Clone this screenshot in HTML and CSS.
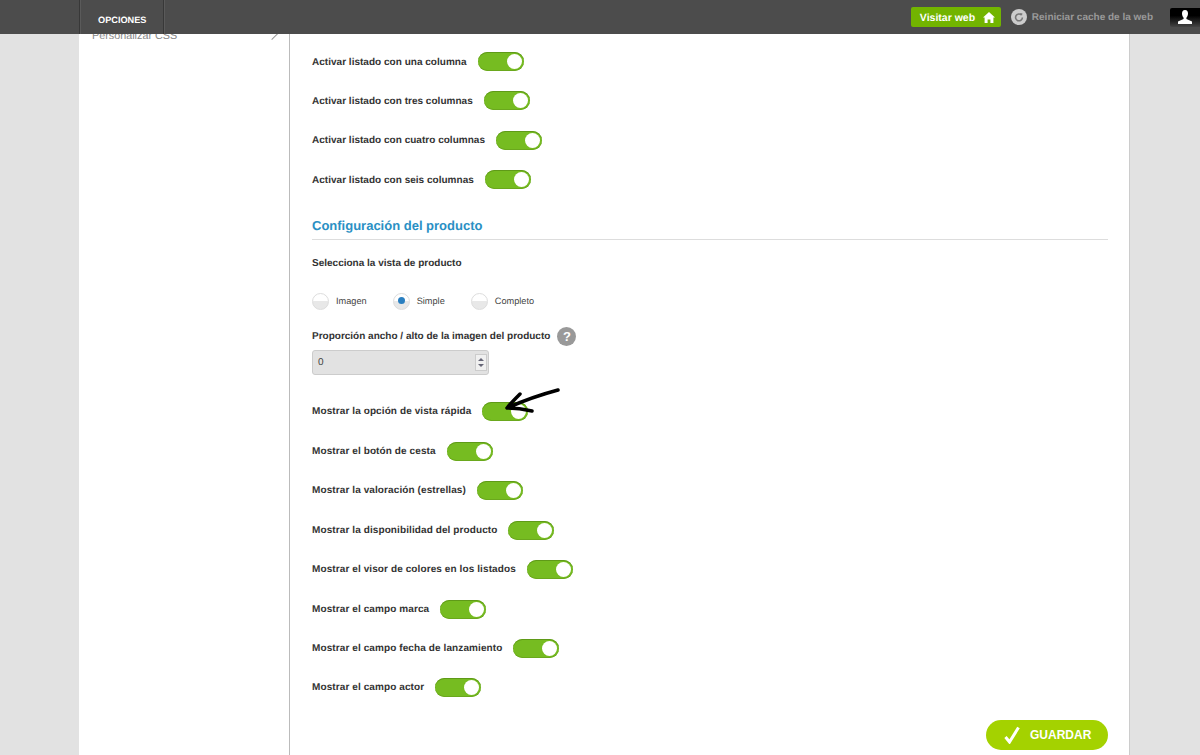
FILE: index.html
```html
<!DOCTYPE html>
<html lang="es">
<head>
<meta charset="utf-8">
<title>Opciones</title>
<link rel="stylesheet" href="styles.css">
</head>
<body>
<header class="topbar">
  <nav class="tabs"><a class="tab">OPCIONES</a></nav>
  <div class="actions">
    <a class="visit">Visitar web
      <svg class="home" viewBox="0 0 12 11" width="12" height="11"><path d="M6 0 L12 5.6 L10.4 5.6 L10.4 11 L7.4 11 L7.4 7.4 L4.6 7.4 L4.6 11 L1.6 11 L1.6 5.6 L0 5.6 Z" fill="#fff"/></svg>
    </a>
    <a class="reset">
      <svg class="reload" viewBox="0 0 16 16" width="16" height="16"><circle cx="8" cy="8" r="8" fill="#ccc"/><path d="M10.4 6 A3.4 3.4 0 1 0 11.4 8.4" fill="none" stroke="#777" stroke-width="1.6"/><path d="M8.8 4.2 L11.4 4.2 L11 6.8 Z" fill="#777"/></svg>
      <span class="reset-text">Reiniciar cache de la web</span>
    </a>
    <a class="user">
      <svg viewBox="0 0 14 14" width="14" height="14"><path d="M7 0 C9.2 0 10 1.8 10 3.6 C10 5.4 9.2 7 8.4 7.8 L8.4 9 L14 11.4 L14 14 L0 14 L0 11.4 L5.6 9 L5.6 7.8 C4.8 7 4 5.4 4 3.6 C4 1.8 4.8 0 7 0 Z" fill="#fff"/></svg>
    </a>
  </div>
</header>
<div class="page">
  <aside class="sidebar">
    <a class="side-link">Personalizar CSS <span class="chev"></span></a>
  </aside>
  <main class="content">
    <div class="group first">
      <div class="row"><span class="lbl">Activar listado con una columna</span><span class="toggle"></span></div>
      <div class="row"><span class="lbl">Activar listado con tres columnas</span><span class="toggle"></span></div>
      <div class="row"><span class="lbl">Activar listado con cuatro columnas</span><span class="toggle"></span></div>
      <div class="row"><span class="lbl">Activar listado con seis columnas</span><span class="toggle"></span></div>
    </div>
    <h2 class="section">Configuración del producto</h2>
    <p class="lbl sub">Selecciona la vista de producto</p>
    <div class="radios">
      <label class="radio"><span class="dot"></span>Imagen</label>
      <label class="radio"><span class="dot on"></span>Simple</label>
      <label class="radio"><span class="dot"></span>Completo</label>
    </div>
    <div class="prop"><span class="lbl">Proporción ancho / alto de la imagen del producto</span><span class="help">?</span></div>
    <div class="spin"><span class="val">0</span><span class="arrows"><i class="up"></i><i class="down"></i></span></div>
    <div class="group second">
      <div class="row"><span class="lbl">Mostrar la opción de vista rápida</span><span class="toggle"></span>
        <svg class="scribble" viewBox="0 0 60 30" width="60" height="30"><path d="M55 2 C40 6 22 12 4 20 M17 6 C12 11 8 15 4 20 C12 20 20 21 29 23" fill="none" stroke="#000" stroke-width="3.5" stroke-linecap="round" stroke-linejoin="round"/></svg>
      </div>
      <div class="row"><span class="lbl">Mostrar el botón de cesta</span><span class="toggle"></span></div>
      <div class="row"><span class="lbl">Mostrar la valoración (estrellas)</span><span class="toggle"></span></div>
      <div class="row"><span class="lbl">Mostrar la disponibilidad del producto</span><span class="toggle"></span></div>
      <div class="row"><span class="lbl">Mostrar el visor de colores en los listados</span><span class="toggle"></span></div>
      <div class="row"><span class="lbl">Mostrar el campo marca</span><span class="toggle"></span></div>
      <div class="row"><span class="lbl">Mostrar el campo fecha de lanzamiento</span><span class="toggle"></span></div>
      <div class="row"><span class="lbl">Mostrar el campo actor</span><span class="toggle"></span></div>
    </div>
    <div class="footer">
      <button class="save">
        <svg viewBox="0 0 16 18" width="16" height="18"><path d="M1.5 11 L5.5 16 L14.5 1.5" fill="none" stroke="#fff" stroke-width="3"/></svg>
        GUARDAR
      </button>
    </div>
  </main>
</div>
</body>
</html>
```
FILE: styles.css
```css
* { box-sizing: border-box; }
html, body { margin: 0; height: 755px; overflow: hidden; }
body {
  background: #e2e2e2;
  font-family: "Liberation Sans", Arial, sans-serif;
  color: #333;
  position: relative;
  text-rendering: geometricPrecision;
}
.topbar {
  position: absolute;
  top: 0; left: 0; right: 0;
  height: 34px;
  background: #4c4c4c;
  display: flex;
  justify-content: space-between;
  padding-left: 79px;
  z-index: 5;
}
.tabs { display: flex; }
.tab {
  width: 85px;
  padding-left: 18px;
  border-left: 1px solid #383838;
  border-right: 1px solid #383838;
  box-shadow: inset 1px 0 0 #5a5a5a, 1px 0 0 #5a5a5a;
  color: #fff;
  font-size: 9.2px;
  font-weight: bold;
  line-height: 40px;
}
.actions { display: flex; align-items: center; }
.visit {
  width: 90px;
  height: 20px;
  background: #72b400;
  border-radius: 2px;
  color: #fff;
  font-size: 10.5px;
  font-weight: bold;
  display: flex;
  align-items: center;
  justify-content: space-between;
  padding: 1px 6px 0 9px;
  margin-right: 10px;
}
.reset {
  display: flex;
  align-items: center;
  gap: 5px;
  color: #999;
  font-size: 10px;
  font-weight: bold;
  margin-right: 17px;
}
.reset-text { padding-top: 1px; }
.user {
  width: 30px;
  height: 19px;
  background: linear-gradient(#000 40%, #444);
  border-radius: 2px 0 0 2px;
  display: flex;
  align-items: center;
  justify-content: center;
}
.page {
  width: 1050px;
  height: 755px;
  margin-left: 79px;
  background: #fff;
  display: flex;
  box-shadow: 1px 0 0 #ccc;
}
.sidebar {
  flex: none;
  width: 211px;
  padding: 28px 12px 0 13px;
  border-right: 1px solid #bbb;
}
.side-link {
  display: flex;
  justify-content: space-between;
  align-items: center;
  color: #888;
  font-size: 10.8px;
  line-height: 14px;
}
.chev {
  width: 10px; height: 10px;
  margin-bottom: 6px;
  border-top: 1px solid #999;
  border-right: 1px solid #999;
  transform: rotate(45deg);
}
.content {
  flex: 1;
  padding: 0 21px 0 22px;
  min-width: 0;
}
.group.first { padding-top: 41.8px; }
.row {
  height: 39.45px;
  display: flex;
  align-items: center;
  gap: 11px;
  position: relative;
}
.lbl {
  font-size: 10px;
  font-weight: bold;
  color: #333;
}
.first .lbl { letter-spacing: 0.02px; padding-top: 1px; }
.second .lbl { letter-spacing: 0.1px; }
.toggle {
  width: 46px;
  height: 19px;
  border-radius: 10px;
  background: #76bc21;
  box-shadow: inset 0 -1px 0 #6aa81d, inset 0 1px 0 #5f9a18;
  position: relative;
  flex: none;
}
.toggle::after {
  content: "";
  position: absolute;
  right: 2px; top: 2px;
  width: 15px; height: 15px;
  border-radius: 50%;
  background: #fff;
}
.scribble { position: absolute; left: 191px; top: -4px; }
.section {
  margin: 17.6px 0 0;
  font-size: 13px;
  font-weight: bold;
  color: #2a90c4;
  line-height: 17px;
  border-bottom: 1px solid #ddd;
  height: 23px;
}
.sub { margin: 17px 0 0; line-height: 13px; }
.radios { display: flex; margin-top: 21px; height: 20px; align-items: center; gap: 26px; }
.radio {
  display: flex;
  align-items: center;
  gap: 7px;
  font-size: 9.2px;
  color: #444;
}
.dot {
  width: 17px; height: 17px;
  border-radius: 50%;
  background: linear-gradient(#fff 50%, #e8e8e8 50%);
  border: 1px solid #ddd;
  position: relative;
}
.dot.on::after {
  content: "";
  position: absolute;
  left: 4px; top: 3px;
  width: 7px; height: 7px;
  border-radius: 50%;
  background: #2a7fc0;
}
.prop { display: flex; align-items: center; gap: 7px; margin-top: 16px; height: 19px; }
.help {
  width: 19px; height: 19px;
  border-radius: 50%;
  background: #999;
  color: #fff;
  font-size: 13px;
  font-weight: bold;
  text-align: center;
  line-height: 19px;
}
.spin {
  width: 177px; height: 25px;
  margin-top: 4px;
  background: #e2e2e2;
  border: 1px solid #ccc;
  border-radius: 3px;
  display: flex;
  align-items: center;
  justify-content: space-between;
  padding: 0 1px 0 5px;
  font-size: 10px;
  color: #444;
}
.arrows {
  width: 12px; height: 17px;
  background: #f0f0f0;
  border: 1px solid #ccc;
  display: flex;
  flex-direction: column;
  align-items: center;
  justify-content: center;
  gap: 3px;
}
.arrows i { width: 0; height: 0; border-left: 3px solid transparent; border-right: 3px solid transparent; }
.arrows .up { border-bottom: 3px solid #667; }
.arrows .down { border-top: 3px solid #667; }
.group.second { margin-top: 17px; }
.footer { display: flex; justify-content: flex-end; margin-top: 12px; }
.save {
  width: 122px; height: 30px;
  border: 0;
  border-radius: 15px;
  background: #a4d200;
  color: #fff;
  font-family: inherit;
  font-size: 12px;
  font-weight: bold;
  display: flex;
  align-items: center;
  gap: 10px;
  padding: 0 0 0 18px;
}
```
